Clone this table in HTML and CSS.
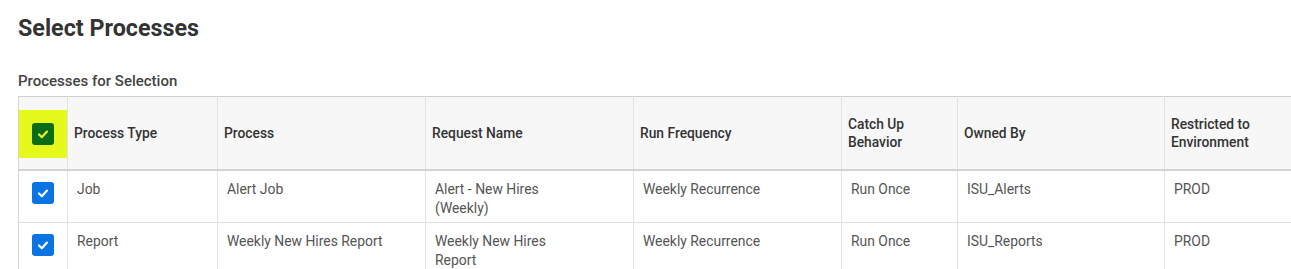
FILE: index.html
```html
<!DOCTYPE html>
<html>
<head>
<meta charset="utf-8">
<link rel="stylesheet" href="styles.css">
</head>
<body>
<div class="page">
  <h1 class="title">Select Processes</h1>
  <h2 class="subtitle">Processes for Selection</h2>
  <table class="grid">
    <colgroup>
      <col class="c-check"><col class="c-type"><col class="c-wide"><col class="c-wide"><col class="c-wide"><col class="c-catch"><col class="c-owner"><col class="c-wide">
    </colgroup>
    <thead>
      <tr>
        <th class="check-cell"><div class="highlight"><span class="box box-green"><svg viewBox="0 0 22 22" width="22" height="22"><path d="M7 11.5 L9.8 14.2 L15 8.6" fill="none" stroke="#e8f52a" stroke-width="2.2" stroke-linecap="round" stroke-linejoin="round"/></svg></span></div></th>
        <th>Process Type</th>
        <th>Process</th>
        <th>Request Name</th>
        <th>Run Frequency</th>
        <th>Catch Up<br>Behavior</th>
        <th>Owned By</th>
        <th>Restricted to<br>Environment</th>
      </tr>
    </thead>
    <tbody>
      <tr>
        <td class="check-cell"><span class="box box-blue"><svg viewBox="0 0 22 22" width="22" height="22"><path d="M7 11.5 L9.8 14.2 L15 8.6" fill="none" stroke="#fff" stroke-width="2.2" stroke-linecap="round" stroke-linejoin="round"/></svg></span></td>
        <td>Job</td>
        <td>Alert Job</td>
        <td>Alert - New Hires<br>(Weekly)</td>
        <td>Weekly Recurrence</td>
        <td>Run Once</td>
        <td>ISU_Alerts</td>
        <td>PROD</td>
      </tr>
      <tr>
        <td class="check-cell"><span class="box box-blue"><svg viewBox="0 0 22 22" width="22" height="22"><path d="M7 11.5 L9.8 14.2 L15 8.6" fill="none" stroke="#fff" stroke-width="2.2" stroke-linecap="round" stroke-linejoin="round"/></svg></span></td>
        <td>Report</td>
        <td>Weekly New Hires Report</td>
        <td>Weekly New Hires<br>Report</td>
        <td>Weekly Recurrence</td>
        <td>Run Once</td>
        <td>ISU_Reports</td>
        <td>PROD</td>
      </tr>
    </tbody>
  </table>
</div>
</body>
</html>
```
FILE: styles.css
```css
html, body {
  margin: 0;
  padding: 0;
  background: #ffffff;
  overflow: hidden;
}
body {
  font-family: Roboto, "Liberation Sans", Arial, sans-serif;
  color: #333333;
}
.page {
  padding: 0 0 0 18px;
  width: 1400px;
}
.title {
  margin: 0;
  padding-top: 15px;
  font-size: 23.3px;
  line-height: 26px;
  font-weight: 700;
  color: #333333;
}
.subtitle {
  margin: 0;
  padding-top: 31px;
  font-size: 15px;
  line-height: 18px;
  font-weight: 500;
  color: #444444;
}
.grid {
  margin-top: 6px;
  border-collapse: collapse;
  table-layout: fixed;
  width: 1355px;
  border-top: 1px solid #cfcfcf;
  border-left: 1px solid #d6d6d6;
}
.c-check { width: 49px; }
.c-type { width: 150px; }
.c-wide { width: 208px; }
.c-catch { width: 116px; }
.c-owner { width: 207px; }
.grid th, .grid td {
  border-right: 1px solid #e3e3e3;
  text-align: left;
  box-sizing: border-box;
}
.grid th {
  background: #f7f7f7;
  height: 73px;
  padding: 0 6px;
  font-size: 13.8px;
  line-height: 18px;
  font-weight: 500;
  color: #333333;
  vertical-align: middle;
  border-bottom: 2px solid #d3d3d3;
}
.grid td {
  height: 53px;
  padding: 9px 9px 0 9px;
  font-size: 13.9px;
  line-height: 19px;
  color: #555555;
  vertical-align: top;
  border-bottom: 1px solid #e0e0e0;
}
.grid th.check-cell {
  padding: 0;
  vertical-align: middle;
}
.highlight {
  height: 48px;
  margin-top: 3px;
  background: #e6f91c;
  display: flex;
  align-items: center;
  justify-content: center;
}
.grid td.check-cell {
  padding: 11px 0 0 0;
  text-align: center;
}
.box {
  display: inline-flex;
  width: 22px;
  height: 22px;
  border-radius: 3px;
  vertical-align: top;
}
.box-green {
  background: #0c6b17;
}
.box-blue {
  background: #0a74e3;
}
```
